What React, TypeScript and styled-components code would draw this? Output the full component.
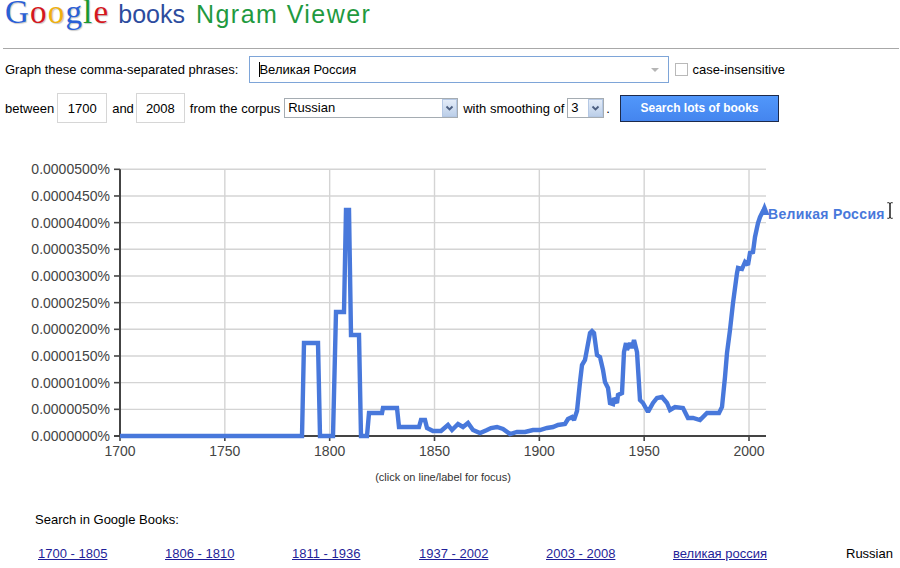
import React from "react";
import styled, { createGlobalStyle } from "styled-components";

const Global = createGlobalStyle`
  html, body { margin: 0; padding: 0; background: #fff; }
  body { font-family: "Liberation Sans", Arial, sans-serif; }
`;

const Page = styled.div`
  position: relative;
  width: 900px;
  height: 568px;
  overflow: hidden;
  font-family: "Liberation Sans", Arial, sans-serif;
  font-size: 13px;
  color: #000;
`;

const Header = styled.div`
  display: flex;
  align-items: baseline;
  height: 48px;
  padding-left: 5px;
  box-sizing: border-box;
  line-height: 28px;
`;

const Logo = styled.span`
  display: inline-flex;
  align-items: baseline;
  font-family: "Liberation Serif", "Times New Roman", serif;
  font-size: 33px;
  line-height: 24px;
  text-shadow: 1px 1px 1px rgba(0, 0, 0, 0.22);
`;

const LogoLetter = styled.span<{ $c: string }>`
  display: inline-block;
  line-height: 24px;
  margin-right: 1.2px;
  color: ${(p) => p.$c};
`;

const Books = styled.span`
  font-size: 25px;
  color: #2c4c9e;
  margin-left: 9px;
`;

const Title = styled.span`
  font-size: 25px;
  color: #1f9a3f;
  margin-left: 11px;
  letter-spacing: 1.45px;
`;

const Rule = styled.div`
  margin-left: 3px;
  width: 896px;
  border-top: 1px solid #a8a8a8;
`;

const Row = styled.div<{ $top: number; $h: number }>`
  display: flex;
  align-items: center;
  margin-top: ${(p) => p.$top}px;
  height: ${(p) => p.$h}px;
  padding-left: 5px;
  white-space: nowrap;
`;

const Label = styled.span<{ $ml?: number }>`
  margin-left: ${(p) => p.$ml ?? 0}px;
`;

const PhraseBox = styled.div`
  position: relative;
  margin-left: 11px;
  width: 420px;
  height: 27px;
  box-sizing: border-box;
  border: 1px solid #7ea5d8;
  display: flex;
  align-items: center;
  padding-left: 9px;
`;

const Caret = styled.span`
  width: 1px;
  height: 15px;
  background: #000;
  margin-right: -1px;
`;

const ComboArrow = styled.span`
  margin-left: auto;
  margin-right: 9px;
  width: 0;
  height: 0;
  border-left: 4px solid transparent;
  border-right: 4px solid transparent;
  border-top: 4px solid #b5b5b5;
`;

const Check = styled.span`
  margin-left: 6px;
  width: 13px;
  height: 13px;
  box-sizing: border-box;
  border: 1px solid #b9b9b9;
  background: #fff;
`;

const YearBox = styled.div<{ $w: number; $ml: number }>`
  margin-left: ${(p) => p.$ml}px;
  width: ${(p) => p.$w}px;
  height: 30px;
  box-sizing: border-box;
  border: 1px solid #d6d6d6;
  display: flex;
  align-items: center;
  justify-content: center;
`;

const SelectBox = styled.div<{ $w: number; $ml: number }>`
  margin-left: ${(p) => p.$ml}px;
  width: ${(p) => p.$w}px;
  height: 20px;
  box-sizing: border-box;
  border: 1px solid #a5acb2;
  display: flex;
  align-items: stretch;
`;

const SelectValue = styled.span`
  flex: 1;
  padding-left: 3px;
  line-height: 18px;
`;

const DropBtn = styled.span`
  width: 15px;
  box-sizing: border-box;
  border: 1px solid #b5c8e4;
  background: linear-gradient(#e4ecf8, #bccfe9);
  display: flex;
  align-items: center;
  justify-content: center;
`;

const SearchButton = styled.div`
  margin-left: 10px;
  width: 159px;
  height: 27px;
  box-sizing: border-box;
  border: 1px solid #1d2a4a;
  background: linear-gradient(#5197fb, #4485ee);
  color: #fff;
  font-weight: bold;
  font-size: 12px;
  display: flex;
  align-items: center;
  justify-content: center;
`;

const Chart = styled.svg`
  display: block;
  margin-top: 27px;
`;

const Caption = styled.div`
  margin-left: 120px;
  width: 646px;
  text-align: center;
  font-size: 11px;
  line-height: 14px;
  color: #333;
`;

const SearchIn = styled.div`
  margin-top: 28px;
  padding-left: 35px;
  line-height: 16px;
`;

const LinkRow = styled.div`
  display: grid;
  grid-template-columns: repeat(6, 127px) auto;
  margin-top: 18px;
  padding-left: 38px;
  line-height: 16px;
`;

const BookLink = styled.a`
  color: #1f1f99;
  text-decoration: underline;
`;

const Corpus = styled.span`
  padding-left: 46px;
`;

const Cursor = styled.svg`
  position: absolute;
  left: 886px;
  top: 201px;
`;

const Chevron = () => (
  <svg width="9" height="7" viewBox="0 0 9 7">
    <polyline points="1.5,1.5 4.5,4.5 7.5,1.5" fill="none" stroke="#4d5f80" strokeWidth="1.8" />
  </svg>
);

const X0 = 120;
const X1 = 766;
const Y0 = 436;
const YSTEP = 26.67;
const LINE = "#4878db";

const yLabels = [
  "0.0000000%", "0.0000050%", "0.0000100%", "0.0000150%", "0.0000200%", "0.0000250%",
  "0.0000300%", "0.0000350%", "0.0000400%", "0.0000450%", "0.0000500%",
];
const xYears = [1700, 1750, 1800, 1850, 1900, 1950, 2000];
const xOf = (yr: number) => X0 + (yr - 1700) * 2.0967;

const pts: [number, number][] = [
  [120, 436], [302, 436], [304, 343], [318, 343], [320, 436], [333, 436], [336, 312], [344, 312],
  [346, 210], [349, 210], [351, 335], [359, 335], [361, 436], [367, 436], [369, 413], [382, 413],
  [383, 408], [397, 408], [399, 427], [419, 427], [421, 420], [425, 420], [427, 428], [433, 431],
  [441, 431], [448, 425], [452, 430], [458, 424], [463, 427], [468, 423], [473, 430], [480, 433],
  [487, 430], [491, 428], [497, 427], [503, 429], [510, 434], [517, 432], [525, 432], [533, 430],
  [540, 430], [547, 428], [553, 427], [558, 425], [565, 424], [568, 419], [572, 417], [574, 420],
  [577, 411], [580, 382], [582, 365], [585, 360], [590, 333], [592, 331], [594, 333], [597, 355],
  [600, 357], [603, 370], [605, 382], [608, 388], [610, 403], [613, 404], [614, 398], [617, 403],
  [618, 395], [622, 393], [624, 352], [626, 343], [627, 350], [630, 343], [632, 348], [634, 340],
  [637, 352], [640, 400], [643, 403], [648, 412], [653, 403], [657, 398], [662, 397], [667, 403],
  [670, 410], [675, 407], [683, 408], [688, 418], [693, 418], [700, 420], [707, 413], [713, 413],
  [719, 413], [722, 407], [725, 377], [727, 353], [730, 330], [733, 303], [737, 273], [738, 268],
  [742, 269], [745, 262], [748, 265], [750, 253], [753, 252], [755, 237], [758, 223], [760, 217],
  [763, 211], [765, 208],
];

const links = ["1700 - 1805", "1806 - 1810", "1811 - 1936", "1937 - 2002", "2003 - 2008", "великая россия"];

export default function App() {
  return (
    <Page>
      <Global />
      <Header>
        <Logo>
          <LogoLetter $c="#2a5fd6">G</LogoLetter>
          <LogoLetter $c="#d5171d">o</LogoLetter>
          <LogoLetter $c="#efb00f">o</LogoLetter>
          <LogoLetter $c="#2a5fd6">g</LogoLetter>
          <LogoLetter $c="#17992f">l</LogoLetter>
          <LogoLetter $c="#d5171d">e</LogoLetter>
        </Logo>
        <Books>books</Books>
        <Title>Ngram Viewer</Title>
      </Header>
      <Rule />
      <Row $top={7} $h={27}>
        <Label>Graph these comma-separated phrases:</Label>
        <PhraseBox>
          <Caret />
          <span>Великая Россия</span>
          <ComboArrow />
        </PhraseBox>
        <Check />
        <Label $ml={4}>case-insensitive</Label>
      </Row>
      <Row $top={10} $h={30}>
        <Label>between</Label>
        <YearBox $w={50} $ml={3}>1700</YearBox>
        <Label $ml={5}>and</Label>
        <YearBox $w={49} $ml={2}>2008</YearBox>
        <Label $ml={5}>from the corpus</Label>
        <SelectBox $w={174} $ml={4}>
          <SelectValue>Russian</SelectValue>
          <DropBtn>
            <Chevron />
          </DropBtn>
        </SelectBox>
        <Label $ml={5}>with smoothing of</Label>
        <SelectBox $w={37} $ml={3}>
          <SelectValue>3</SelectValue>
          <DropBtn>
            <Chevron />
          </DropBtn>
        </SelectBox>
        <Label $ml={2}>.</Label>
        <SearchButton>Search lots of books</SearchButton>
      </Row>

      <Chart width={900} height={320} viewBox="0 150 900 320">
        {yLabels.map((_, i) => {
          const y = Y0 - i * YSTEP;
          return i > 0 ? (
            <line key={"h" + i} x1={X0} x2={X1} y1={y} y2={y} stroke="#d4d4d4" strokeWidth={1.4} />
          ) : null;
        })}
        {xYears.slice(1).map((yr) => (
          <line key={"v" + yr} x1={xOf(yr)} x2={xOf(yr)} y1={Y0 - 10 * YSTEP} y2={Y0} stroke="#d4d4d4" strokeWidth={1.4} />
        ))}
        {yLabels.map((t, i) => {
          const y = Y0 - i * YSTEP;
          return (
            <g key={"yl" + i}>
              <line x1={114} x2={X0} y1={y} y2={y} stroke="#444" strokeWidth={1.6} />
              <text x={110} y={y + 5} textAnchor="end" fontSize={14} fill="#444" fontFamily="Liberation Sans, Arial, sans-serif">
                {t}
              </text>
            </g>
          );
        })}
        {xYears.map((yr) => (
          <g key={"xl" + yr}>
            <line x1={xOf(yr)} x2={xOf(yr)} y1={Y0} y2={Y0 + 5} stroke="#444" strokeWidth={1.6} />
            <text x={xOf(yr)} y={456} textAnchor="middle" fontSize={14} fill="#444" fontFamily="Liberation Sans, Arial, sans-serif">
              {yr}
            </text>
          </g>
        ))}
        <line x1={X0} x2={X0} y1={Y0 - 10 * YSTEP} y2={Y0 + 1} stroke="#444" strokeWidth={2} />
        <line x1={114} x2={X1} y1={Y0} y2={Y0} stroke="#444" strokeWidth={2} />
        <polyline
          points={pts.map((p) => p.join(",")).join(" ")}
          fill="none"
          stroke={LINE}
          strokeWidth={4.4}
          strokeLinejoin="miter"
          strokeMiterlimit={2}
        />
        <polygon points="764.5,202 759.5,215 769.5,215" fill={LINE} />
        <text x={768} y={219} fontSize={14} fontWeight="bold" letterSpacing={0.35} fill={LINE} fontFamily="Liberation Sans, Arial, sans-serif">
          Великая Россия
        </text>
      </Chart>
      <Caption>(click on line/label for focus)</Caption>
      <SearchIn>Search in Google Books:</SearchIn>
      <LinkRow>
        {links.map((l) => (
          <span key={l}>
            <BookLink href="#">{l}</BookLink>
          </span>
        ))}
        <Corpus>Russian</Corpus>
      </LinkRow>
      <Cursor width={8} height={19} viewBox="0 0 8 19">
        <path d="M1 1h2.5v0.5h1V1H7v1.5H5v14h2V18H4.5v-0.5h-1V18H1v-1.5h2v-14H1z" fill="#111" stroke="#fff" strokeWidth={0.6} />
      </Cursor>
    </Page>
  );
}
